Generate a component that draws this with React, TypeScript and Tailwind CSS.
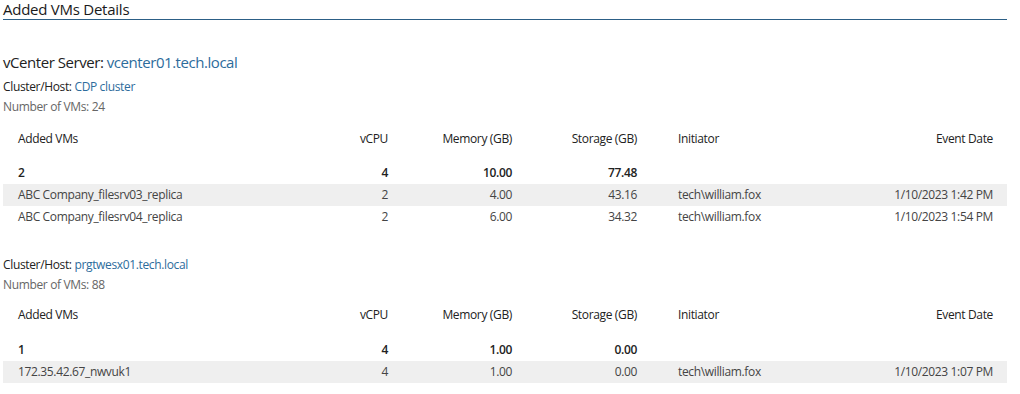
const font = { fontFamily: '"Open Sans", "Noto Sans", sans-serif' };

type Vm = { name: string; cpu: number; mem: string; sto: string; who: string; date: string };

const cols = "grid grid-cols-[297px_88px_124px_125px_213px_157px] items-center";

function VmTable({ total, rows, headMt, totalMt }: { total: [string, string, string, string]; rows: Vm[]; headMt: string; totalMt: string }) {
  return (
    <div className="text-[12px] tracking-[-0.35px]">
      <div className={`${cols} h-[22px] ${headMt} text-[#222]`}>
        <div className="pl-[15px]">Added VMs</div>
        <div className="text-right">vCPU</div>
        <div className="text-right">Memory (GB)</div>
        <div className="text-right">Storage (GB)</div>
        <div className="pl-[41px]">Initiator</div>
        <div className="text-right pr-[14px]">Event Date</div>
      </div>
      <div className={`${cols} h-[22px] ${totalMt} text-[#222] font-semibold`}>
        <div className="pl-[15px]">{total[0]}</div>
        <div className="text-right">{total[1]}</div>
        <div className="text-right">{total[2]}</div>
        <div className="text-right">{total[3]}</div>
        <div />
        <div />
      </div>
      {rows.map((r, i) => (
        <div key={r.name} className={`${cols} h-[22px] text-[#444] ${i % 2 === 0 ? "bg-[#efefef]" : ""}`}>
          <div className="pl-[15px]">{r.name}</div>
          <div className="text-right">{r.cpu}</div>
          <div className="text-right">{r.mem}</div>
          <div className="text-right">{r.sto}</div>
          <div className="pl-[41px]">{r.who}</div>
          <div className="text-right pr-[14px]">{r.date}</div>
        </div>
      ))}
    </div>
  );
}

export default function App() {
  return (
    <div className="w-[1020px] h-[394px] bg-white pl-[3px] overflow-hidden" style={font}>
      <div className="w-[1004px]">
        {/* header */}
        <div className="h-[20px] border-b border-[#2c5f86] text-[15px] leading-[18px] tracking-[-0.25px] text-[#1a1a1a]">Added VMs Details</div>

        <div className="mt-[31px] h-[22px] leading-[22px] text-[15px] tracking-[-0.45px] text-[#222]">
          vCenter Server: <span className="text-[#2d6c9c]">vcenter01.tech.local</span>
        </div>

        <div className="mt-[4px] h-[20px] leading-[20px] text-[12px] tracking-[-0.35px] text-[#222]">
          Cluster/Host: <span className="text-[#2d6c9c]">CDP cluster</span>
        </div>
        <div className="h-[20px] leading-[20px] text-[12px] tracking-[-0.35px] text-[#666]">Number of VMs: 24</div>

        <VmTable
          headMt="mt-[11px]"
          totalMt="mt-[12px]"
          total={["2", "4", "10.00", "77.48"]}
          rows={[
            { name: "ABC Company_filesrv03_replica", cpu: 2, mem: "4.00", sto: "43.16", who: "tech\\william.fox", date: "1/10/2023 1:42 PM" },
            { name: "ABC Company_filesrv04_replica", cpu: 2, mem: "6.00", sto: "34.32", who: "tech\\william.fox", date: "1/10/2023 1:54 PM" },
          ]}
        />

        <div className="mt-[27px] h-[20px] leading-[20px] text-[12px] tracking-[-0.35px] text-[#222]">
          Cluster/Host: <span className="text-[#2d6c9c]">prgtwesx01.tech.local</span>
        </div>
        <div className="h-[20px] leading-[20px] text-[12px] tracking-[-0.35px] text-[#666]">Number of VMs: 88</div>

        <VmTable
          headMt="mt-[9px]"
          totalMt="mt-[13px]"
          total={["1", "4", "1.00", "0.00"]}
          rows={[
            { name: "172.35.42.67_nwvuk1", cpu: 4, mem: "1.00", sto: "0.00", who: "tech\\william.fox", date: "1/10/2023 1:07 PM" },
          ]}
        />
      </div>
    </div>
  );
}
